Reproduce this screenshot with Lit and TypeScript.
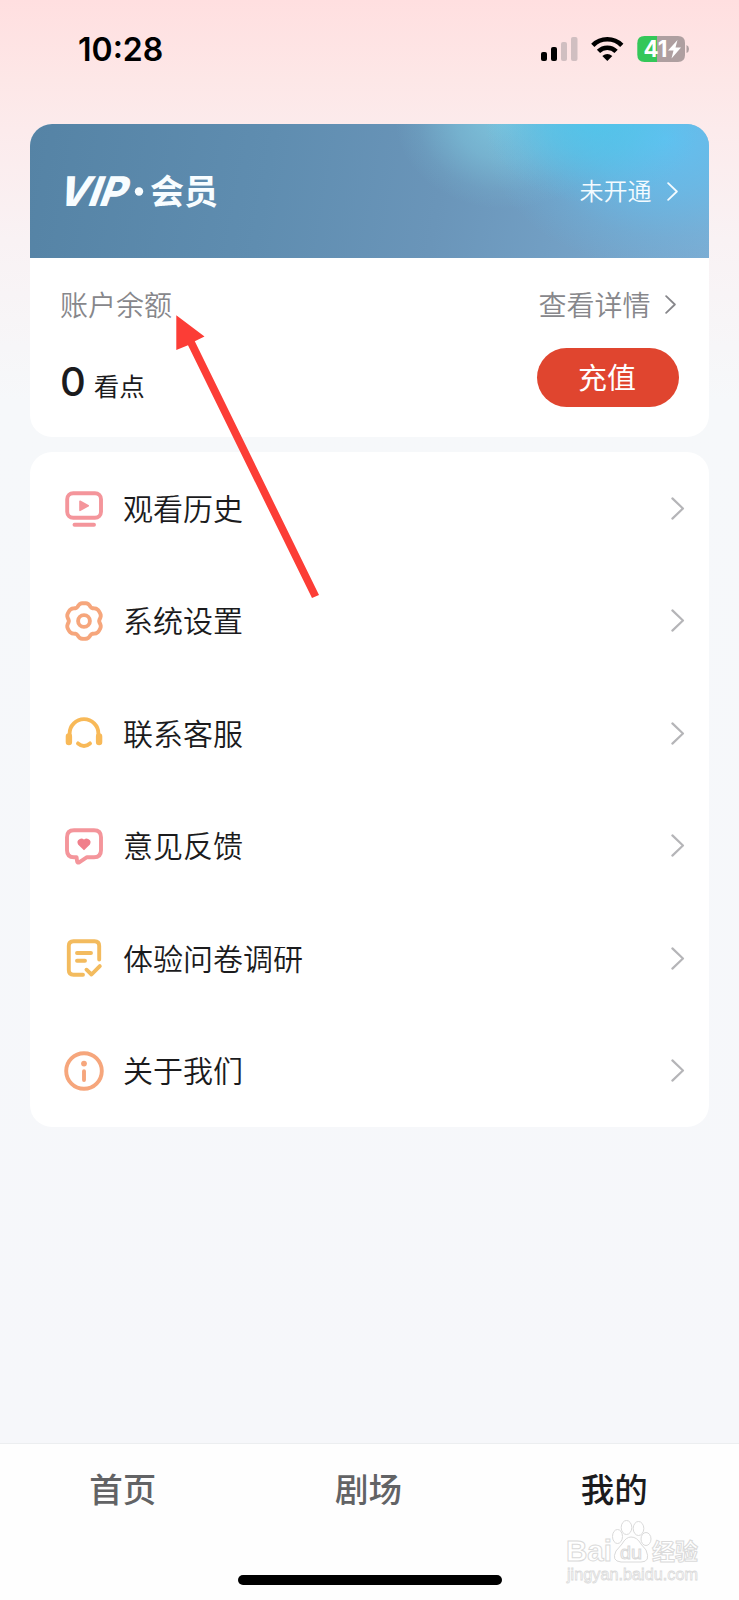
import { LitElement, html, css, svg } from "lit";
import { customElement, property } from "lit/decorators.js";

const gear = (() => {
  const pts: string[] = [];
  for (let i = 0; i < 72; i++) {
    const t = (i / 72) * Math.PI * 2;
    const c = Math.cos(6 * t);
    const r = 16.9 + 1.35 * c - 0.4 * Math.cos(12 * t);
    pts.push(`${(20 + r * Math.sin(t)).toFixed(2)} ${(20 - r * Math.cos(t)).toFixed(2)}`);
  }
  return "M" + pts.join("L") + "Z";
})();

const icons: Record<string, unknown> = {
  history: svg`<g stroke="#f4959b"><rect x="3.2" y="5.2" width="33.8" height="24.600" rx="6"/><path d="M10.5 36.800H30"/><path d="M16 13.300L24.2 17.800L16 22.300Z" fill="#f4959b" stroke-width="1.6"/></g>`,
  settings: svg`<g stroke="#f6a67c"><path d=${gear}/><circle cx="20" cy="20" r="5.900"/></g>`,
  service: svg`<g stroke="#f8b958"><path d="M5.6 24V20.500A14.4 14.4 0 0 1 34.4 20.500V24"/><path d="M4.900 23.500V29M35.100 23.500V29" stroke-width="6.400"/><path d="M14 30.400Q20 35.400 26 30.400"/></g>`,
  feedback: svg`<g stroke="#f4959b"><path d="M10 4.300H30Q37 4.300 37 11.300V24.200Q37 31.200 30 31.200H23L15.500 36.200Q13.200 37.400 13 34.800L12.600 31.200H10Q3 31.200 3 24.200V11.300Q3 4.300 10 4.300Z"/><path d="M20 23.300L14.900 18.200A2.900 2.900 0 0 1 20 14.900A2.900 2.900 0 0 1 25.100 18.200Z" fill="#f07f8b" stroke="#f07f8b" stroke-width="1.6"/></g>`,
  survey: svg`<g stroke="#f3bb5e"><path d="M35.2 21.500V8Q35.2 3.300 30.5 3.300H9.5Q4.8 3.300 4.8 8V32Q4.8 36.700 9.5 36.700H19"/><path d="M13 15H27M13 22.800H21"/><path d="M22.5 31.7L27.5 36.5L35.8 28.1"/></g>`,
  about: svg`<g stroke="#f6a67c"><circle cx="20" cy="20" r="17.8"/><path d="M20 20.2V29"/><circle cx="20" cy="12.6" r="2.9" fill="#f6a67c" stroke="none"/></g>`,
};

@customElement("line-chevron")
class LineChevron extends LitElement {
  static styles = css`
    :host { display: block; flex: none; }
    svg { display: block; fill: none; stroke: currentColor; stroke-width: 1.9; stroke-linecap: round; stroke-linejoin: round; }
  `;
  @property({ type: Number }) size = 20;
  render() {
    return html`<svg width=${this.size * 0.6} height=${this.size} viewBox="0 0 12 20"><path d="M1.2 1.2L10.4 10L1.2 18.8"/></svg>`;
  }
}

@customElement("menu-row")
class MenuRow extends LitElement {
  static styles = css`
    :host { display: flex; flex: 1; align-items: center; padding: 0 24px 0 34px; color: #1b1b1d; font-size: 30px; }
    .icon { width: 40px; height: 40px; fill: none; stroke-width: 3.9; stroke-linecap: round; stroke-linejoin: round; }
    .label { flex: 1; margin-left: 19px; line-height: 40px; padding-bottom: 3px; }
    line-chevron { color: #b5b5b8; }
  `;
  @property() icon = "";
  @property() label = "";
  render() {
    return html`<svg class="icon" viewBox="0 0 40 40">${icons[this.icon]}</svg>
      <span class="label">${this.label}</span><line-chevron .size=${23}></line-chevron>`;
  }
}

@customElement("app-root")
class AppRoot extends LitElement {
  static styles = css`
    :host {
      display: flex; flex-direction: column; position: relative; box-sizing: border-box;
      width: 739px; height: 1600px; overflow: hidden;
      font-family: "Noto Sans CJK SC", sans-serif; font-weight: 350; color: #1b1b1d;
      background: linear-gradient(#ffdfe0 0, #fde7e7 80px, #fcebec 130px, #f9f2f4 240px, #f6f8fa 400px, #f6f7fa 1443px);
    }
    .status { height: 124px; display: flex; align-items: flex-start; padding: 0 50px 0 78px; justify-content: space-between; flex: none; }
    .time { font: 600 32px/38px Inter, sans-serif; margin-top: 31px; color: #000; letter-spacing: 0; }
    .status svg { margin-top: 35px; display: block; }
    .card { margin: 0 30px; border-radius: 22px; overflow: hidden; background: #fff; height: 313px; flex: none; }
    .vip {
      height: 134px; display: flex; align-items: center; justify-content: space-between; padding: 0 31px 0 24px; box-sizing: border-box; color: #f4fbff;
      background:
        radial-gradient(ellipse 110px 90px at 563px -10px, #4cc8ecd0 0, #4cc8ec80 45%, #4cc8ec20 80%, #4cc8ec00 100%),
        radial-gradient(ellipse 180px 130px at 635px 15px, #62c0f0 0, #62c0f0a0 40%, #62c0f030 75%, #62c0f000 100%),
        radial-gradient(ellipse 110px 90px at 475px -5px, #80cce2d0 0, #80cce280 45%, #80cce220 80%, #80cce200 100%),
        linear-gradient(100deg, #5583a5 0, #5f8db0 35%, #6a95b9 60%, #7cacd2 100%);
    }
    .logo { display: block; }
    .more { display: flex; align-items: center; }
    .more.state { font-size: 24px; gap: 15px; }
    .more.state span { padding-bottom: 3px; }
    .balance { display: flex; justify-content: space-between; padding: 28px 34px 0 30px; }
    .more.detail, .caption { font-size: 28px; line-height: 36px; color: #87878b; }
    .more.detail { gap: 14px; margin-right: -1px; }
    .left { display: flex; flex-direction: column; }
    .right { display: flex; flex-direction: column; align-items: flex-end; }
    .amount { display: flex; align-items: baseline; gap: 8px; margin-top: 36px; line-height: 48px; }
    .number { font: 500 40px/48px Inter, sans-serif; }
    .unit { font-size: 25.5px; font-weight: 400; }
    .pay { width: 142px; height: 59px; border: 0; border-radius: 30px; background: #e0452f; color: #fff; font: 29px/40px "Noto Sans CJK SC", sans-serif; padding: 0 2px 3px 0; margin: 26px -4px 0 0; }
    .menu { margin: 15px 30px 0; border-radius: 22px; background: #fff; height: 675px; display: flex; flex-direction: column; flex: none; }
    .tabs { margin-top: auto; height: 157px; box-sizing: border-box; background: #fefefe; border-top: 1px solid #eceef0; display: flex; flex-direction: column; align-items: center; justify-content: space-between; padding: 20px 0 15px; }
    .items { display: flex; width: 737px; margin-right: 2px; }
    .tab { flex: 1; text-align: center; font-size: 33.5px; line-height: 48px; font-weight: 500; color: #626365; }
    .tab.on { color: #1b1b1d; }
    .home { width: 264px; height: 10px; border-radius: 5px; background: #000; }
    .arrow { position: absolute; left: 170px; top: 310px; }
    .mark { position: absolute; left: 555px; top: 1512px; }
  `;

  render() {
    const rows = [
      ["history", "观看历史"], ["settings", "系统设置"], ["service", "联系客服"],
      ["feedback", "意见反馈"], ["survey", "体验问卷调研"], ["about", "关于我们"],
    ];
    return html`
      <header class="status">
        <span class="time">10:28</span>
        <svg width="150" height="28" viewBox="0 0 150 28">
          <rect x="2" y="17" width="6" height="9" rx="2"/><rect x="12" y="12" width="6" height="14" rx="2"/>
          <g fill="#d0bfc1"><rect x="22" y="7" width="6" height="19" rx="2"/><rect x="32" y="2" width="6.5" height="24" rx="2"/></g>
          <g fill="none" stroke="#000" stroke-width="4.600"><path d="M53.800 10.300A20.500 20.500 0 0 1 82.800 10.300"/><path d="M59.500 16.300A12.500 12.500 0 0 1 77.100 16.300"/></g>
          <path d="M63.300 21Q68.300 17 73.300 21L68.300 26Z"/>
          <path d="M105.500 1H118V27H105.500Q98.300 27 98.300 19.800V8.200Q98.300 1 105.500 1Z" fill="#34c759"/>
          <path d="M118 1H139Q146 1 146 8V20Q146 27 139 27H118Z" fill="#ae9fa0"/>
          <path d="M147.500 10Q150 11 150 14Q150 17 147.500 18Z" fill="#ae9fa0"/>
          <text x="104.500" y="22" font-family="Inter" font-weight="700" font-size="23" textLength="24" lengthAdjust="spacingAndGlyphs" fill="#fff">41</text>
          <path d="M138.500 5L129 15.500H134.500L132.500 23.500L142 12.500H136.500Z" fill="#fff"/>
        </svg>
      </header>
      <section class="card">
        <div class="vip">
          <svg class="logo" width="180" height="70" viewBox="-6 -13 180 70" fill="#f8fdff">
            <text transform="translate(-4.500 37) skewX(-20)" font-family="Inter" font-weight="800" font-size="41" textLength="68" lengthAdjust="spacingAndGlyphs">VIP</text>
            <circle cx="79" cy="22.500" r="4.200"/>
            <text x="90" y="35" font-family="Noto Sans CJK SC" font-weight="700" font-size="34">会员</text>
          </svg>
          <div class="more state"><span>未开通</span><line-chevron .size=${19}></line-chevron></div>
        </div>
        <div class="balance">
          <div class="left">
            <span class="caption">账户余额</span>
            <div class="amount"><span class="number">0</span><span class="unit">看点</span></div>
          </div>
          <div class="right">
            <div class="more detail"><span>查看详情</span><line-chevron .size=${19}></line-chevron></div>
            <button class="pay">充值</button>
          </div>
        </div>
      </section>
      <nav class="menu">${rows.map(([i, l]) => html`<menu-row .icon=${i} .label=${l}></menu-row>`)}</nav>
      <footer class="tabs">
        <div class="items"><span class="tab">首页</span><span class="tab">剧场</span><span class="tab on">我的</span></div>
        <div class="home"></div>
      </footer>
      <svg class="arrow" width="155" height="295" viewBox="170 310 155 295" fill="#fc3d36">
        <path d="M176.300 315.300L204.500 336.500L194.800 341.300L319 595L312 598L188 345.300L176.300 350Z"/>
      </svg>
      <svg class="mark" width="155" height="84" viewBox="555 1512 155 84" fill="#fff" stroke="#dadada" stroke-width="1">
        <text x="566" y="1561" font-family="Liberation Sans" font-weight="700" font-size="30" textLength="46" lengthAdjust="spacingAndGlyphs">Bai</text>
        <ellipse cx="617.500" cy="1536.500" rx="5" ry="7"/><ellipse cx="626.500" cy="1527.500" rx="5.300" ry="7"/>
        <ellipse cx="638.500" cy="1528.500" rx="5.300" ry="7"/><ellipse cx="646" cy="1539" rx="5" ry="6.500"/>
        <path d="M631 1537Q637 1537 641 1544L646 1550Q651 1562 641 1562H621Q611 1561 616 1551L622 1544Q626 1537 631 1537Z"/>
        <text x="620" y="1559" font-family="Liberation Sans" font-size="19" textLength="22" lengthAdjust="spacingAndGlyphs">du</text>
        <text x="652" y="1560" font-family="Noto Sans CJK SC" font-weight="700" font-size="23" textLength="46">经验</text>
        <text x="567" y="1579.500" font-family="Liberation Sans" font-size="17" stroke-width=".8" textLength="131" lengthAdjust="spacingAndGlyphs">jingyan.baidu.com</text>
      </svg>
    `;
  }
}
